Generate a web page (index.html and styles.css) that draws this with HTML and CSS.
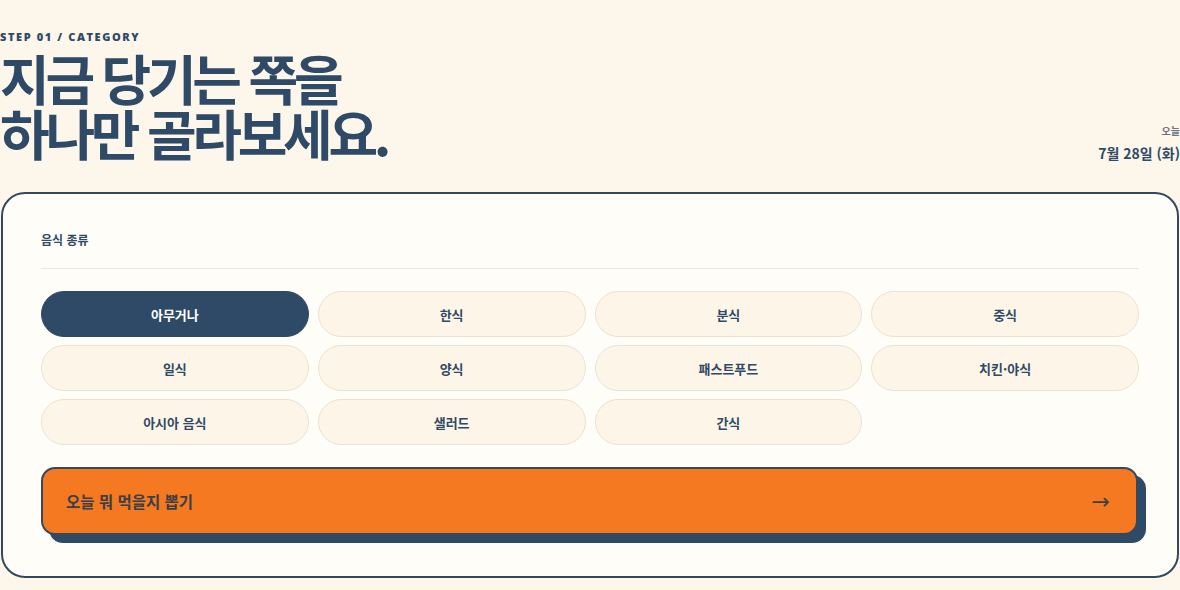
FILE: index.html
```html
<!DOCTYPE html>
<html lang="ko">
<head>
  <meta charset="utf-8">
  <title>오늘 뭐 먹지</title>
  <link rel="stylesheet" href="styles.css">
</head>
<body>
  <div class="page">
    <header class="top">
      <div class="intro">
        <p class="step">STEP 01 / CATEGORY</p>
        <h1 class="title">지금 당기는 쪽을<br>하나만 골라보세요.</h1>
      </div>
      <div class="today">
        <span class="today-label">오늘</span>
        <span class="today-date">7월 28일 (화)</span>
      </div>
    </header>

    <section class="card">
      <h2 class="card-label">음식 종류</h2>
      <div class="chips">
        <button class="chip active">아무거나</button>
        <button class="chip">한식</button>
        <button class="chip">분식</button>
        <button class="chip">중식</button>
        <button class="chip">일식</button>
        <button class="chip">양식</button>
        <button class="chip">패스트푸드</button>
        <button class="chip">치킨·야식</button>
        <button class="chip">아시아 음식</button>
        <button class="chip">샐러드</button>
        <button class="chip">간식</button>
      </div>
      <button class="pick">
        <span>오늘 뭐 먹을지 뽑기</span>
        <span class="arrow">→</span>
      </button>
    </section>
  </div>
</body>
</html>
```

FILE: styles.css
```css
html, body {
  margin: 0;
  padding: 0;
}
body {
  --navy: #2f4a66;
  --cream: #fdf6ea;
  --paper: #fffdf8;
  --orange: #f47920;

  background-color: var(--cream);
  font-family: "Noto Sans CJK KR", "Noto Sans", sans-serif;
  color: var(--navy);
}
.page {
  width: 1180px;
}
.top {
  display: flex;
  justify-content: space-between;
  align-items: flex-end;
  padding-top: 29px;
}
.step {
  margin: 0;
  font-family: "Open Sans", "Noto Sans", sans-serif;
  font-weight: 800;
  font-size: 11px;
  letter-spacing: 1.6px;
  line-height: 16px;
}
.title {
  margin: 5px 0 0;
  font-size: 54px;
  font-weight: 700;
  line-height: 55px;
  letter-spacing: -4.3px;
}
.today {
  display: flex;
  flex-direction: column;
  align-items: flex-end;
  margin-bottom: -5px;
}
.today-label {
  font-size: 10px;
  font-weight: 700;
  color: #6b7480;
  line-height: 16px;
}
.today-date {
  font-size: 14px;
  font-weight: 700;
  line-height: 24px;
  margin-top: 2px;
}
.card {
  margin: 32px 1px 0;
  background-color: var(--paper);
  border: 2px solid #34495e;
  border-radius: 24px;
  padding: 36px 38px 41px;
}
.card-label {
  margin: 0;
  font-size: 12px;
  font-weight: 700;
  line-height: 20px;
  padding-bottom: 18px;
  border-bottom: 1px solid #ece7dc;
}
.chips {
  display: grid;
  grid-template-columns: repeat(4, 1fr);
  gap: 8px 9px;
  margin-top: 22px;
}
.chip {
  height: 46px;
  border: 1px solid #ebe3d2;
  border-radius: 23px;
  background-color: #fdf6e8;
  font-family: inherit;
  font-size: 13px;
  font-weight: 700;
  color: var(--navy);
}
.chip.active {
  background-color: var(--navy);
  border-color: var(--navy);
  color: #fff;
}
.pick {
  display: flex;
  justify-content: space-between;
  align-items: center;
  width: calc(100% - 1px);
  height: 68px;
  margin-top: 22px;
  padding: 0 26px 0 23px;
  background-color: var(--orange);
  border: 2px solid #34495e;
  border-radius: 14px;
  box-shadow: 8px 8px 0 var(--navy);
  font-family: inherit;
  font-size: 15.5px;
  font-weight: 700;
  color: #3b3f48;
}
.arrow {
  font-size: 22px;
  font-weight: 400;
  font-family: "DejaVu Sans", sans-serif;
}
```
